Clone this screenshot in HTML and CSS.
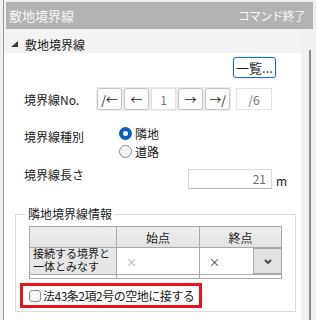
FILE: index.html
```html
<!DOCTYPE html>
<html lang="ja">
<head>
    <meta charset="UTF-8">
    <meta name="viewport" content="width=device-width, initial-scale=1.0">
    <title>敷地境界線</title>
    <link rel="stylesheet" href="styles.css">
</head>
<body>
    <div class="window">
        <div class="titlebar">
            <span class="title">敷地境界線</span>
            <span class="end-cmd">コマンド終了</span>
        </div>

        <div class="main">
            <div class="panel">
                <div class="section-head">
                    <svg class="twisty" width="8" height="7" viewBox="0 0 8 7"><polygon points="7,0 7,6 0,6" fill="#3a3a3a"/></svg>
                    <span>敷地境界線</span>
                </div>

                <div class="form">
                    <div class="list-row">
                        <button class="btn list-btn" type="button">一覧...</button>
                    </div>

                    <div class="nav-row">
                        <span class="label nav-label">境界線No.</span>
                        <div class="nav-group">
                            <button class="btn nav-btn" type="button">/←</button>
                            <button class="btn nav-btn" type="button">←</button>
                            <span class="num-box">1</span>
                            <button class="btn nav-btn" type="button">→</button>
                            <button class="btn nav-btn" type="button">→/</button>
                        </div>
                        <span class="num-box total">/6</span>
                    </div>

                    <div class="kind-row">
                        <span class="label kind-label">境界線種別</span>
                        <div class="radio-group">
                            <label class="radio-item"><span class="radio on"></span>隣地</label>
                            <label class="radio-item"><span class="radio"></span>道路</label>
                        </div>
                    </div>

                    <div class="len-row">
                        <span class="label len-label">境界線長さ</span>
                        <span class="len-box">21</span>
                        <span class="unit">m</span>
                    </div>
                </div>

                <fieldset class="group">
                    <legend>隣地境界線情報</legend>
                    <table class="grid">
                        <tr class="head">
                            <th class="col-name"></th>
                            <th class="col-start">始点</th>
                            <th class="col-end">終点</th>
                        </tr>
                        <tr class="data">
                            <th class="rowhead"><span class="rh-line">接続する境界と</span><span class="rh-line">一体とみなす</span></th>
                            <td class="cell-x light">×</td>
                            <td class="combo">
                                <div class="combo-inner">
                                    <span class="combo-text">×</span>
                                    <span class="drop">
                                        <svg width="8" height="5" viewBox="0 0 8 5"><polyline points="1,1 4,4 7,1" fill="none" stroke="#4a4a4a" stroke-width="2"/></svg>
                                    </span>
                                </div>
                            </td>
                        </tr>
                        <tr class="tail"><td></td><td></td><td></td></tr>
                    </table>

                    <div class="highlight">
                        <span class="check"></span>
                        <span class="check-text">法43条2項2号の空地に接する</span>
                    </div>
                </fieldset>
            </div>

            <div class="scroll">
                <div class="thumb"></div>
            </div>
        </div>
    </div>
</body>
</html>
```

FILE: styles.css
```css
body {
    margin: 0;
    background: #f0f0f0;
    font-family: "Noto Sans CJK JP", "Noto Sans", sans-serif;
    font-size: 12px;
    color: #1b1b1b;
}
.window {
    margin-left: 3px;
    border-left: 1px solid #9a9a9a;
    height: 320px;
    display: flex;
    flex-direction: column;
    overflow: hidden;
}
.titlebar {
    margin: 2px 3px 0 2px;
    height: 27px;
    background: #b3b3b3;
    color: #f7f7f7;
    display: flex;
    align-items: center;
    justify-content: space-between;
    padding: 0 8px 0 3px;
    font-size: 13px;
}
.end-cmd {
    font-size: 12px;
    letter-spacing: -0.8px;
}
.main {
    flex: 1;
    display: flex;
    min-height: 0;
}
.panel {
    flex: 1;
    background: #fff;
}
.scroll {
    width: 19px;
    display: flex;
    padding: 21px 0 0 8px;
    box-sizing: border-box;
}
.thumb {
    width: 2px;
    background: #8a8a8a;
}
.section-head {
    height: 24px;
    box-sizing: border-box;
    padding: 7px 0 0 7px;
    background: #f3f3f3;
    display: flex;
    align-items: center;
    line-height: 17px;
}
.twisty {
    margin-right: 6px;
}
.form {
    padding-left: 20px;
}
.label {
    flex-shrink: 0;
    line-height: 17px;
}
.btn {
    font-family: inherit;
    font-size: 12px;
    color: #1b1b1b;
    background: #fbfbfb;
    border: 1px solid #c6c6c6;
    border-radius: 3px;
    padding: 0;
    box-sizing: border-box;
}
.list-row {
    display: flex;
    justify-content: flex-end;
    margin: 4px 25px 0 0;
}
.list-btn {
    width: 43px;
    height: 21px;
    border-color: #1a6fd0;
    background: #fff;
    box-shadow: 0 0 0 1px #ececec;
    font-size: 13px;
}
.nav-row {
    display: flex;
    align-items: center;
    margin-top: 9px;
    height: 24px;
}
.nav-label {
    width: 72px;
}
.nav-group {
    display: flex;
    gap: 2px;
    padding: 1px;
    background: #ececec;
}
.nav-btn {
    width: 25px;
    height: 22px;
}
.num-box {
    width: 25px;
    height: 22px;
    box-sizing: border-box;
    border: 1px solid #e2e2e2;
    background: #fff;
    color: #777;
    display: flex;
    align-items: center;
    justify-content: center;
}
.num-box.total {
    width: 36px;
    margin-left: 5px;
}
.kind-row {
    display: flex;
    margin-top: 13px;
}
.kind-label {
    width: 95px;
    padding-top: 4px;
}
.radio-item {
    display: flex;
    align-items: center;
    gap: 3px;
    height: 18px;
}
.radio {
    width: 13px;
    height: 13px;
    box-sizing: border-box;
    border-radius: 50%;
    border: 1px solid #8a8a8a;
    background: #f4f4f4;
}
.radio.on {
    border: 4px solid #0a5fc0;
    background: #fff;
}
.len-row {
    display: flex;
    align-items: flex-start;
    margin-top: 9px;
}
.len-label {
    width: 164px;
    line-height: 12px;
}
.len-box {
    width: 84px;
    height: 20px;
    box-sizing: border-box;
    border: 1px solid #d8d8d8;
    border-bottom-color: #b8b8b8;
    color: #6d6d6d;
    text-align: right;
    padding-right: 5px;
    line-height: 18px;
}
.unit {
    margin: 6px 0 0 4px;
    line-height: 12px;
}
.group {
    margin: 17px 5px 0 11px;
    border: 1px solid #dcdcdc;
    padding: 4px 13px 3px 4px;
}
.group legend {
    margin-left: 6px;
    padding: 0 2px;
    line-height: 16px;
}
.grid {
    margin-left: 9px;
    width: 249px;
    border-collapse: collapse;
    font-size: 11px;
    line-height: 13px;
    table-layout: fixed;
}
.grid th,
.grid td {
    border: 1px solid #a9a9a9;
    padding: 0;
    font-weight: normal;
}
.col-name {
    width: 86px;
}
.col-start {
    width: 82px;
}
.col-end {
    width: 81px;
}
.head th {
    height: 20px;
    background: linear-gradient(#efefef, #e2e2e2);
    text-align: center;
    font-size: 12px;
}
.data {
    height: 27px;
}
.rowhead {
    background: #e6e6e6;
    text-align: left;
    padding-left: 3px !important;
    font-family: "Liberation Sans", "Noto Sans CJK JP", sans-serif;
}
.rh-line {
    display: block;
    line-height: 13px;
}
.cell-x {
    padding-left: 9px !important;
    padding-top: 3px !important;
}
.light {
    color: #a8a8a8;
}
.combo-inner {
    display: flex;
    height: 26px;
    align-items: center;
}
.combo-text {
    flex: 1;
    padding: 3px 0 0 9px;
    color: #333;
}
.drop {
    width: 28px;
    height: 26px;
    box-sizing: border-box;
    border: 1px solid #a6a6a6;
    border-right: none;
    background: #e1e1e1;
    display: flex;
    align-items: center;
    justify-content: center;
}
.tail td {
    height: 3px;
    background: #fff;
}
.highlight {
    margin-top: 4px;
    width: 182px;
    height: 25px;
    box-sizing: border-box;
    border: 3px solid #e8141c;
    display: flex;
    align-items: center;
    padding-left: 6px;
    gap: 2px;
}
.check {
    width: 12px;
    height: 12px;
    box-sizing: border-box;
    border: 1px solid #8a8a8a;
    border-radius: 3px;
    background: #f7f7f7;
}
.check-text {
    letter-spacing: -0.5px;
}
```
